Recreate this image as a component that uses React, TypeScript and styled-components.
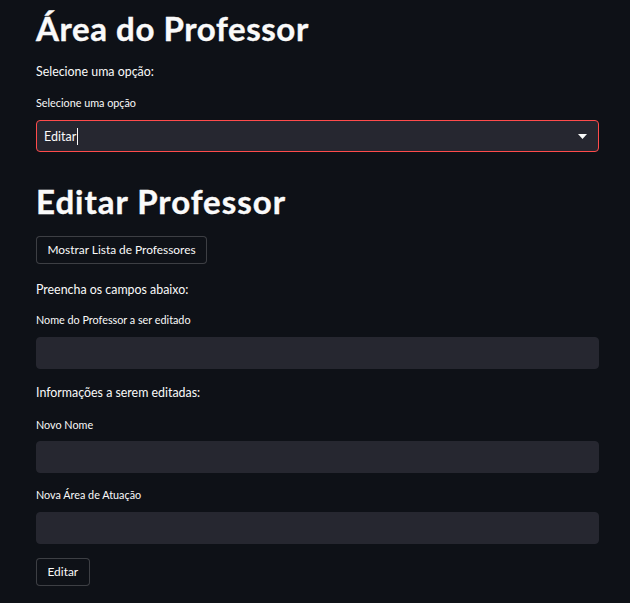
import React from "react";
import styled, { createGlobalStyle } from "styled-components";

const GlobalStyle = createGlobalStyle`
  html, body {
    margin: 0;
    padding: 0;
    background: #0e1117;
  }
  body {
    font-family: "Lato", "Noto Sans", sans-serif;
    color: #fafafa;
  }
  * { box-sizing: border-box; }
`;

const Page = styled.main`
  min-height: 603px;
  background: #0e1117;
  padding: 6px 31px 20px 36px;
  display: flex;
  flex-direction: column;
`;

const Title = styled.h1<{ $top?: number }>`
  margin: ${(p) => p.$top ?? 0}px 0 0;
  font-size: 33px;
  line-height: 44px;
  font-weight: 700;
  color: #fafafa;
  letter-spacing: 0.6px;
  -webkit-text-stroke: 0.4px #fafafa;
`;

const SubTitle = styled(Title).attrs({ as: "h2" })`
  letter-spacing: 1px;
`;

const Text = styled.p<{ $top: number }>`
  margin: ${(p) => p.$top}px 0 0;
  font-size: 12.4px;
  line-height: 21px;
  color: #fafafa;
`;

const Label = styled.label<{ $top: number }>`
  display: block;
  margin: ${(p) => p.$top}px 0 0;
  font-size: 10.8px;
  line-height: 18px;
  color: #fafafa;
`;

const Field = styled.div<{ $top: number; $focus?: boolean }>`
  margin-top: ${(p) => p.$top}px;
  height: 32px;
  background: #262730;
  border: 1px solid ${(p) => (p.$focus ? "#ff4b4b" : "#262730")};
  border-radius: 4px;
  display: flex;
  align-items: center;
  padding: 0 11px 0 7px;
  font-size: 12.5px;
  color: #fafafa;
`;

const Caret = styled.span`
  display: inline-block;
  width: 1px;
  height: 17px;
  background: #fafafa;
  margin-left: 1px;
`;

const Spacer = styled.div`
  flex: 1;
`;

const Arrow = styled.svg`
  width: 9px;
  height: 5px;
  display: block;
`;

const Button = styled.button<{ $top: number }>`
  align-self: flex-start;
  margin-top: ${(p) => p.$top}px;
  height: 28px;
  padding: 0 10.5px;
  background: #0e1117;
  border: 1px solid rgba(250, 250, 250, 0.2);
  border-radius: 4px;
  color: #fafafa;
  font-family: inherit;
  font-size: 11.9px;
  line-height: 1;
`;

export default function App() {
  return (
    <>
      <GlobalStyle />
      <Page>
        <Title>Área do Professor</Title>
        <Text $top={11}>Selecione uma opção:</Text>
        <Label $top={12}>Selecione uma opção</Label>
        <Field $top={8} $focus>
          <span>Editar</span>
          <Caret />
          <Spacer />
          <Arrow viewBox="0 0 9 5">
            <path d="M0 0 H9 L4.5 5 Z" fill="#fafafa" />
          </Arrow>
        </Field>
        <SubTitle $top={27}>Editar Professor</SubTitle>
        <Button $top={13}>Mostrar Lista de Professores</Button>
        <Text $top={15}>Preencha os campos abaixo:</Text>
        <Label $top={11}>Nome do Professor a ser editado</Label>
        <Field $top={8} />
        <Text $top={13}>Informações a serem editadas:</Text>
        <Label $top={13}>Novo Nome</Label>
        <Field $top={7} />
        <Label $top={13}>Nova Área de Atuação</Label>
        <Field $top={8} />
        <Button $top={14}>Editar</Button>
      </Page>
    </>
  );
}
